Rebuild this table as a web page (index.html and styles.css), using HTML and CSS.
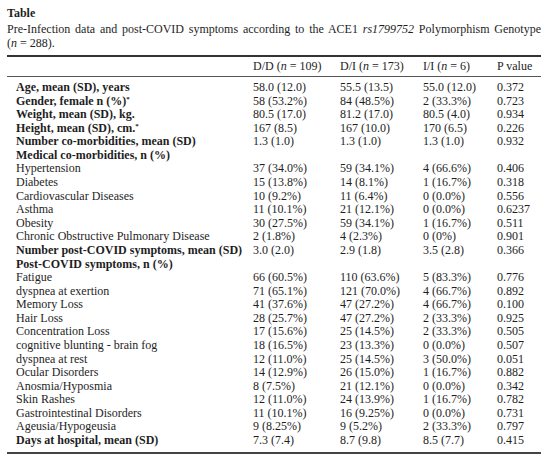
FILE: index.html
```html
<!DOCTYPE html>
<html lang="en">
<head>
    <meta charset="UTF-8">
    <meta name="viewport" content="width=device-width, initial-scale=1.0">
    <title>Table</title>
    <link rel="stylesheet" href="styles.css">
</head>
<body>
    <div class="table-wrap">
        <p class="caption-title">Table</p>
        <p class="caption-text">Pre-Infection data and post-COVID symptoms according to the ACE1 <i>rs1799752</i> Polymorphism Genotype <span class="nowrap">(<i>n</i> = 288).</span></p>

        <table class="data-table">
            <colgroup>
                <col class="col-label">
                <col class="col-dd">
                <col class="col-di">
                <col class="col-ii">
                <col class="col-p">
            </colgroup>
            <thead>
                <tr>
                    <th></th>
                    <th>D/D (<i>n</i> = 109)</th>
                    <th>D/I (<i>n</i> = 173)</th>
                    <th>I/I (<i>n</i> = 6)</th>
                    <th>P value</th>
                </tr>
            </thead>
            <tbody>
                <tr class="first bold"><td>Age, mean (SD), years</td><td>58.0 (12.0)</td><td>55.5 (13.5)</td><td>55.0 (12.0)</td><td>0.372</td></tr>
                <tr class="bold"><td>Gender, female n (%)<sup>*</sup></td><td>58 (53.2%)</td><td>84 (48.5%)</td><td>2 (33.3%)</td><td>0.723</td></tr>
                <tr class="bold"><td>Weight, mean (SD), kg.</td><td>80.5 (17.0)</td><td>81.2 (17.0)</td><td>80.5 (4.0)</td><td>0.934</td></tr>
                <tr class="bold"><td>Height, mean (SD), cm.<sup>*</sup></td><td>167 (8.5)</td><td>167 (10.0)</td><td>170 (6.5)</td><td>0.226</td></tr>
                <tr class="bold"><td>Number co-morbidities, mean (SD)</td><td>1.3 (1.0)</td><td>1.3 (1.0)</td><td>1.3 (1.0)</td><td>0.932</td></tr>
                <tr class="bold"><td>Medical co-morbidities, n (%)</td><td></td><td></td><td></td><td></td></tr>
                <tr><td>Hypertension</td><td>37 (34.0%)</td><td>59 (34.1%)</td><td>4 (66.6%)</td><td>0.406</td></tr>
                <tr><td>Diabetes</td><td>15 (13.8%)</td><td>14 (8.1%)</td><td>1 (16.7%)</td><td>0.318</td></tr>
                <tr><td>Cardiovascular Diseases</td><td>10 (9.2%)</td><td>11 (6.4%)</td><td>0 (0.0%)</td><td>0.556</td></tr>
                <tr><td>Asthma</td><td>11 (10.1%)</td><td>21 (12.1%)</td><td>0 (0.0%)</td><td>0.6237</td></tr>
                <tr><td>Obesity</td><td>30 (27.5%)</td><td>59 (34.1%)</td><td>1 (16.7%)</td><td>0.511</td></tr>
                <tr><td>Chronic Obstructive Pulmonary Disease</td><td>2 (1.8%)</td><td>4 (2.3%)</td><td>0 (0%)</td><td>0.901</td></tr>
                <tr class="bold"><td>Number post-COVID symptoms, mean (SD)</td><td>3.0 (2.0)</td><td>2.9 (1.8)</td><td>3.5 (2.8)</td><td>0.366</td></tr>
                <tr class="bold"><td>Post-COVID symptoms, n (%)</td><td></td><td></td><td></td><td></td></tr>
                <tr><td>Fatigue</td><td>66 (60.5%)</td><td>110 (63.6%)</td><td>5 (83.3%)</td><td>0.776</td></tr>
                <tr><td>dyspnea at exertion</td><td>71 (65.1%)</td><td>121 (70.0%)</td><td>4 (66.7%)</td><td>0.892</td></tr>
                <tr><td>Memory Loss</td><td>41 (37.6%)</td><td>47 (27.2%)</td><td>4 (66.7%)</td><td>0.100</td></tr>
                <tr><td>Hair Loss</td><td>28 (25.7%)</td><td>47 (27.2%)</td><td>2 (33.3%)</td><td>0.925</td></tr>
                <tr><td>Concentration Loss</td><td>17 (15.6%)</td><td>25 (14.5%)</td><td>2 (33.3%)</td><td>0.505</td></tr>
                <tr><td>cognitive blunting - brain fog</td><td>18 (16.5%)</td><td>23 (13.3%)</td><td>0 (0.0%)</td><td>0.507</td></tr>
                <tr><td>dyspnea at rest</td><td>12 (11.0%)</td><td>25 (14.5%)</td><td>3 (50.0%)</td><td>0.051</td></tr>
                <tr><td>Ocular Disorders</td><td>14 (12.9%)</td><td>26 (15.0%)</td><td>1 (16.7%)</td><td>0.882</td></tr>
                <tr><td>Anosmia/Hyposmia</td><td>8 (7.5%)</td><td>21 (12.1%)</td><td>0 (0.0%)</td><td>0.342</td></tr>
                <tr><td>Skin Rashes</td><td>12 (11.0%)</td><td>24 (13.9%)</td><td>1 (16.7%)</td><td>0.782</td></tr>
                <tr><td>Gastrointestinal Disorders</td><td>11 (10.1%)</td><td>16 (9.25%)</td><td>0 (0.0%)</td><td>0.731</td></tr>
                <tr><td>Ageusia/Hypogeusia</td><td>9 (8.25%)</td><td>9 (5.2%)</td><td>2 (33.3%)</td><td>0.797</td></tr>
                <tr class="last bold"><td>Days at hospital, mean (SD)</td><td>7.3 (7.4)</td><td>8.7 (9.8)</td><td>8.5 (7.7)</td><td>0.415</td></tr>
            </tbody>
        </table>
    </div>
</body>
</html>
```

FILE: styles.css
```css
body {
    font-family: "Liberation Serif", "Times New Roman", serif;
    font-size: 12px;
    color: #1e1e1e;
    background-color: #fff;
    margin: 0;
    padding: 6px 5px 0 7px;
}
.table-wrap {
    width: 534px;
}
.caption-title {
    margin: 0;
    line-height: 14px;
    font-weight: bold;
}
.caption-text {
    margin: 2px 0 0;
    line-height: 14px;
    text-align: justify;
}
.nowrap {
    white-space: nowrap;
}
.data-table {
    width: 534px;
    margin-top: 5px;
    border-collapse: collapse;
    table-layout: fixed;
    border-top: 2px solid #333;
    border-bottom: 2px solid #444;
}
.col-label { width: 246px; }
.col-dd { width: 87px; }
.col-di { width: 83px; }
.col-ii { width: 74px; }
.col-p { width: 44px; }
.data-table th {
    font-weight: normal;
    text-align: left;
    line-height: 14px;
    padding: 2px 0 3px;
    border-bottom: 1px solid #555;
    white-space: nowrap;
}
.data-table td {
    padding: 0;
    line-height: 13.58px;
    white-space: nowrap;
}
.data-table td:first-child {
    padding-left: 9px;
}
.data-table tr.bold td:first-child {
    font-weight: bold;
}
.data-table tr.first td {
    padding-top: 4px;
}
.data-table tr.last td {
    padding-bottom: 4px;
}
sup {
    font-size: 7px;
    line-height: 0;
    vertical-align: 4px;
}
```
